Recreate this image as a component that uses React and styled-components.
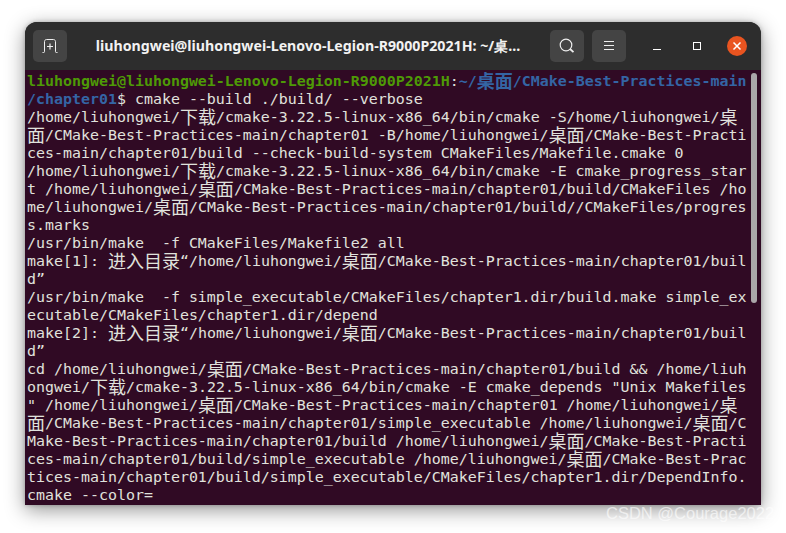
import React from "react";
import styled, { createGlobalStyle } from "styled-components";

const Global = createGlobalStyle`
  html, body { margin: 0; padding: 0; background: #fff; }
  body { width: 786px; height: 533px; overflow: hidden; }
`;

const Page = styled.div`
  position: relative;
  box-sizing: border-box;
  width: 786px;
  height: 533px;
  padding: 22px 25px 28px;
`;

const Window = styled.div`
  display: flex;
  flex-direction: column;
  height: 483px;
  border-radius: 12px 12px 0 0;
  background: #2c2c2c;
  box-shadow: 0 5px 20px rgba(0, 0, 0, 0.42), 0 0 4px rgba(0, 0, 0, 0.25);
  overflow: hidden;
`;

const Header = styled.header`
  display: flex;
  align-items: center;
  flex: 0 0 48px;
  box-sizing: border-box;
  padding: 0 14px 0 8px;
  background: #2d2d2d;
`;

const HeadButton = styled.div`
  display: flex;
  align-items: center;
  justify-content: center;
  flex: 0 0 34px;
  height: 32px;
  margin-left: ${(p) => p.$gap || 0}px;
  border-radius: 5px;
  background: #444444;
  color: #eeeeee;
`;

const Title = styled.div`
  flex: 1;
  min-width: 0;
  padding-right: 1px;
  text-align: center;
  white-space: nowrap;
  color: #f2f2f2;
  font-family: "Noto Sans", sans-serif;
  font-weight: 700;
  font-size: 14.2px;
`;

const WinButton = styled.div`
  display: flex;
  align-items: center;
  justify-content: center;
  flex: 0 0 20px;
  height: 20px;
  margin-left: ${(p) => p.$gap}px;
  border-radius: 50%;
  background: ${(p) => (p.$close ? "#e95420" : "transparent")};
  color: #ffffff;
`;

const Terminal = styled.main`
  position: relative;
  flex: 1;
  box-sizing: border-box;
  padding: 2px 0 0 2px;
  background: #300a24;
  color: #e0e2dd;
  font-family: "DejaVu Sans Mono", monospace;
  font-size: 14.95px;
`;

const Row = styled.div`
  height: 18px;
  line-height: 18px;
  white-space: pre;
`;

const Wide = styled.span`
  font-family: "Noto Sans CJK SC", sans-serif;
  font-size: 18px;
  line-height: 0;
  vertical-align: -2px;
  font-weight: ${(p) => (p.$bold ? 700 : 400)};
`;

const Host = styled.span`
  color: #4e9a06;
  font-weight: 700;
`;

const Path = styled.span`
  color: #3465a4;
  font-weight: 700;
`;

const Thumb = styled.div`
  position: absolute;
  top: 3px;
  right: 4px;
  width: 6px;
  height: 230px;
  border-radius: 3px;
  background: #aaa6a9;
`;

const Watermark = styled.div`
  position: absolute;
  left: 606px;
  top: 503px;
  color: rgba(255, 255, 255, 0.62);
  font-family: "Liberation Sans", sans-serif;
  font-size: 16.5px;
  line-height: 20px;
  white-space: nowrap;
`;

const Mixed = ({ text, bold }) =>
  text.split(/([\u4e00-\u9fff]+)/).map((part, i) =>
    i % 2 ? (
      <Wide key={i} $bold={bold}>
        {part}
      </Wide>
    ) : (
      part
    )
  );

const lines = [
  "/home/liuhongwei/下载/cmake-3.22.5-linux-x86_64/bin/cmake -S/home/liuhongwei/桌",
  "面/CMake-Best-Practices-main/chapter01 -B/home/liuhongwei/桌面/CMake-Best-Practi",
  "ces-main/chapter01/build --check-build-system CMakeFiles/Makefile.cmake 0",
  "/home/liuhongwei/下载/cmake-3.22.5-linux-x86_64/bin/cmake -E cmake_progress_star",
  "t /home/liuhongwei/桌面/CMake-Best-Practices-main/chapter01/build/CMakeFiles /ho",
  "me/liuhongwei/桌面/CMake-Best-Practices-main/chapter01/build//CMakeFiles/progres",
  "s.marks",
  "/usr/bin/make  -f CMakeFiles/Makefile2 all",
  "make[1]: 进入目录“/home/liuhongwei/桌面/CMake-Best-Practices-main/chapter01/buil",
  "d”",
  "/usr/bin/make  -f simple_executable/CMakeFiles/chapter1.dir/build.make simple_ex",
  "ecutable/CMakeFiles/chapter1.dir/depend",
  "make[2]: 进入目录“/home/liuhongwei/桌面/CMake-Best-Practices-main/chapter01/buil",
  "d”",
  "cd /home/liuhongwei/桌面/CMake-Best-Practices-main/chapter01/build && /home/liuh",
  "ongwei/下载/cmake-3.22.5-linux-x86_64/bin/cmake -E cmake_depends \"Unix Makefiles",
  "\" /home/liuhongwei/桌面/CMake-Best-Practices-main/chapter01 /home/liuhongwei/桌",
  "面/CMake-Best-Practices-main/chapter01/simple_executable /home/liuhongwei/桌面/C",
  "Make-Best-Practices-main/chapter01/build /home/liuhongwei/桌面/CMake-Best-Practi",
  "ces-main/chapter01/build/simple_executable /home/liuhongwei/桌面/CMake-Best-Prac",
  "tices-main/chapter01/build/simple_executable/CMakeFiles/chapter1.dir/DependInfo.",
  "cmake --color=",
];

const NewTabIcon = () => (
  <svg width="16" height="14" viewBox="0 0 16 14" fill="none" stroke="currentColor" strokeWidth="1">
    <path d="M0.5 13.5h1.2c.5 0 .8-.3.8-.8V2.5c0-1 .8-2 2-2h7c1.2 0 2 1 2 2v10.200c0 .5.300.8.800.8h1.200" />
    <path d="M8 4.500v6M5 7.500h6" strokeWidth="1.200" />
  </svg>
);

const SearchIcon = () => (
  <svg width="16" height="16" viewBox="0 0 16 16" fill="none" stroke="currentColor">
    <circle cx="7" cy="7" r="5.800" strokeWidth="1.200" />
    <path d="M11 11l3.500 3.200" strokeWidth="1.800" />
  </svg>
);

const MenuIcon = () => (
  <svg width="12" height="12" viewBox="0 0 12 12" fill="none" stroke="currentColor">
    <path d="M1 1.500h10M1 5.500h10M1 9.500h10" />
  </svg>
);

const MinIcon = () => (
  <svg width="10" height="10" viewBox="0 0 10 10" fill="none" stroke="currentColor">
    <path d="M1 8.500h8" />
  </svg>
);

const MaxIcon = () => (
  <svg width="10" height="10" viewBox="0 0 10 10" fill="none" stroke="currentColor">
    <rect x="1.500" y="1.500" width="7" height="7" />
  </svg>
);

const CloseIcon = () => (
  <svg width="10" height="10" viewBox="0 0 10 10" fill="none" stroke="currentColor" strokeWidth="1.500">
    <path d="M1.500 1.500l7 7M8.500 1.500l-7 7" />
  </svg>
);

export default function App() {
  return (
    <Page>
      <Global />
      <Window>
        <Header>
          <HeadButton>
            <NewTabIcon />
          </HeadButton>
          <Title>liuhongwei@liuhongwei-Lenovo-Legion-R9000P2021H: ~/桌...</Title>
          <HeadButton>
            <SearchIcon />
          </HeadButton>
          <HeadButton $gap={8}>
            <MenuIcon />
          </HeadButton>
          <WinButton $gap={21}>
            <MinIcon />
          </WinButton>
          <WinButton $gap={20}>
            <MaxIcon />
          </WinButton>
          <WinButton $close $gap={20}>
            <CloseIcon />
          </WinButton>
        </Header>
        <Terminal>
          <Row>
            <Host>liuhongwei@liuhongwei-Lenovo-Legion-R9000P2021H</Host>:
            <Path>
              ~/<Wide $bold>桌面</Wide>/CMake-Best-Practices-main
            </Path>
          </Row>
          <Row>
            <Path>/chapter01</Path>$ cmake --build ./build/ --verbose
          </Row>
          {lines.map((line, i) => (
            <Row key={i}>
              <Mixed text={line} />
            </Row>
          ))}
          <Thumb />
        </Terminal>
      </Window>
      <Watermark>CSDN @Courage2022</Watermark>
    </Page>
  );
}
